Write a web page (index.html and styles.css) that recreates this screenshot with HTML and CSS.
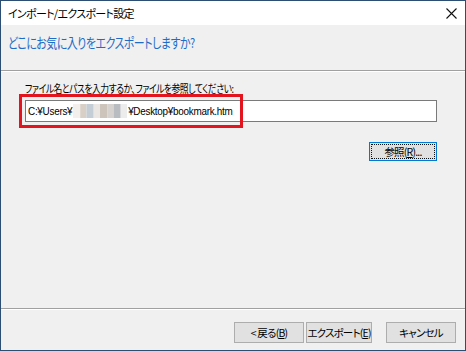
FILE: index.html
```html
<!DOCTYPE html>
<html lang="ja">
<head>
  <meta charset="UTF-8">
  <title>インポート/エクスポート設定</title>
  <link rel="stylesheet" href="styles.css">
</head>
<body>
<div class="window">
  <div class="titlebar">
    <span class="title">インポート/エクスポート設定</span>
    <svg class="close" width="11" height="11" viewBox="0 0 11 11">
      <path d="M0.5 0.5 L10.5 10.5 M10.5 0.5 L0.5 10.5" stroke="#111" stroke-width="1.1" fill="none"/>
    </svg>
  </div>
  <div class="header">
    <div class="heading">どこにお気に入りをエクスポートしますか?</div>
  </div>
  <div class="content">
    <div class="label">ファイル名とパスを入力するか、ファイルを参照してください:</div>
    <div class="field">
      <div class="input">
        <div class="path">
          <span>C:¥Users¥</span><span class="mosaic"><i class="m1"></i><i class="m2"></i><i class="m3"></i><i class="m4"></i><i class="m5"></i><i class="m6"></i><i class="m7"></i><i class="m8"></i></span><span>¥Desktop¥bookmark.htm</span>
        </div>
      </div>
      <div class="highlight"></div>
    </div>
    <div class="browse-row">
      <button class="button browse"><span class="focus">参照(<u>R</u>)...</span></button>
    </div>
  </div>
  <div class="footer">
    <button class="button back">&lt;&nbsp;戻る(<u>B</u>)</button>
    <button class="button export">エクスポート(<u>E</u>)</button>
    <button class="button cancel">キャンセル</button>
  </div>
</div>
</body>
</html>
```
FILE: styles.css
```css
body {
  margin: 0;
  padding: 0;
  background-color: #f0f0f0;
  font-family: "Noto Sans CJK JP", "Liberation Sans", sans-serif;
  font-feature-settings: "palt";
  font-size: 12px;
  color: #000;
}
.window {
  width: 466px;
  height: 351px;
  box-sizing: border-box;
  border: 1px solid #2b4e72;
  display: flex;
  flex-direction: column;
  background-color: #f0f0f0;
}
.titlebar {
  height: 24px;
  background-color: white;
  display: flex;
  align-items: center;
  justify-content: space-between;
  padding: 0 8px 0 7px;
}
.title {
  font-size: 11px;
  letter-spacing: -0.7px;
  line-height: 16px;
}
.header {
  height: 46px;
  box-sizing: border-box;
  padding: 7px 0 0 7px;
  border-bottom: 1px solid #a0a0a0;
}
.heading {
  color: #1f6cc6;
  font-size: 13.5px;
  line-height: 20px;
  letter-spacing: -0.6px;
  white-space: nowrap;
  transform: scaleX(0.81);
  transform-origin: left center;
}
.content {
  flex: 1;
  border-top: 1px solid white;
  padding: 8px 28px 0 24px;
}
.label {
  font-size: 11px;
  line-height: 16px;
  letter-spacing: -0.6px;
  margin-bottom: 4px;
  white-space: nowrap;
  transform: scaleX(0.8);
  transform-origin: left center;
}
.field {
  position: relative;
}
.input {
  height: 22px;
  box-sizing: border-box;
  border: 1px solid #7a7a7a;
  background-color: white;
  padding: 0 2px;
  display: flex;
  align-items: center;
}
.path {
  display: flex;
  align-items: center;
  font-family: "Liberation Sans", "Noto Sans CJK JP", sans-serif;
  font-size: 11px;
  letter-spacing: -0.3px;
  white-space: nowrap;
  transform: scaleX(0.9);
  transform-origin: left center;
}
.mosaic {
  display: flex;
  height: 14px;
  margin: 0 1px;
}
.mosaic i {
  display: block;
  width: 7.5px;
  height: 14px;
}
.m1 { background-color: #f2efec; }
.m2 { background-color: #d8cfc6; }
.m3 { background-color: #c4cdd6; }
.m4 { background-color: #e9e6e3; }
.m5 { background-color: #cdc4bc; }
.m6 { background-color: #d6d2cf; }
.m7 { background-color: #b9bcc1; }
.m8 { background-color: #ececec; }
.highlight {
  position: absolute;
  left: -6px;
  top: -6px;
  width: 224px;
  height: 34px;
  box-sizing: border-box;
  border: 3px solid #e3141e;
}
.browse-row {
  display: flex;
  justify-content: flex-end;
  margin-top: 20px;
}
.button {
  height: 21px;
  box-sizing: border-box;
  background-color: #e1e1e1;
  border: 1px solid #adadad;
  font-family: "Noto Sans CJK JP", "Liberation Sans", sans-serif;
  font-feature-settings: "palt";
  font-size: 10.5px;
  letter-spacing: -0.8px;
  white-space: nowrap;
  padding: 0;
  color: #000;
  line-height: 17px;
}
.browse {
  width: 68px;
  height: 19px;
  border-color: #0078d7;
  padding: 1px;
  display: flex;
}
.browse .focus {
  flex: 1;
  border: 1px dotted #111;
  line-height: 13px;
}
.footer {
  height: 42px;
  box-sizing: border-box;
  border-top: 1px solid #a0a0a0;
  display: flex;
  justify-content: flex-end;
  align-items: flex-start;
  padding: 13px 9px 0 0;
  box-shadow: inset 0 1px 0 white;
}
.back {
  width: 70px;
  margin-right: 2px;
}
.export {
  width: 66px;
  margin-right: 14px;
}
.cancel {
  width: 70px;
}
```
